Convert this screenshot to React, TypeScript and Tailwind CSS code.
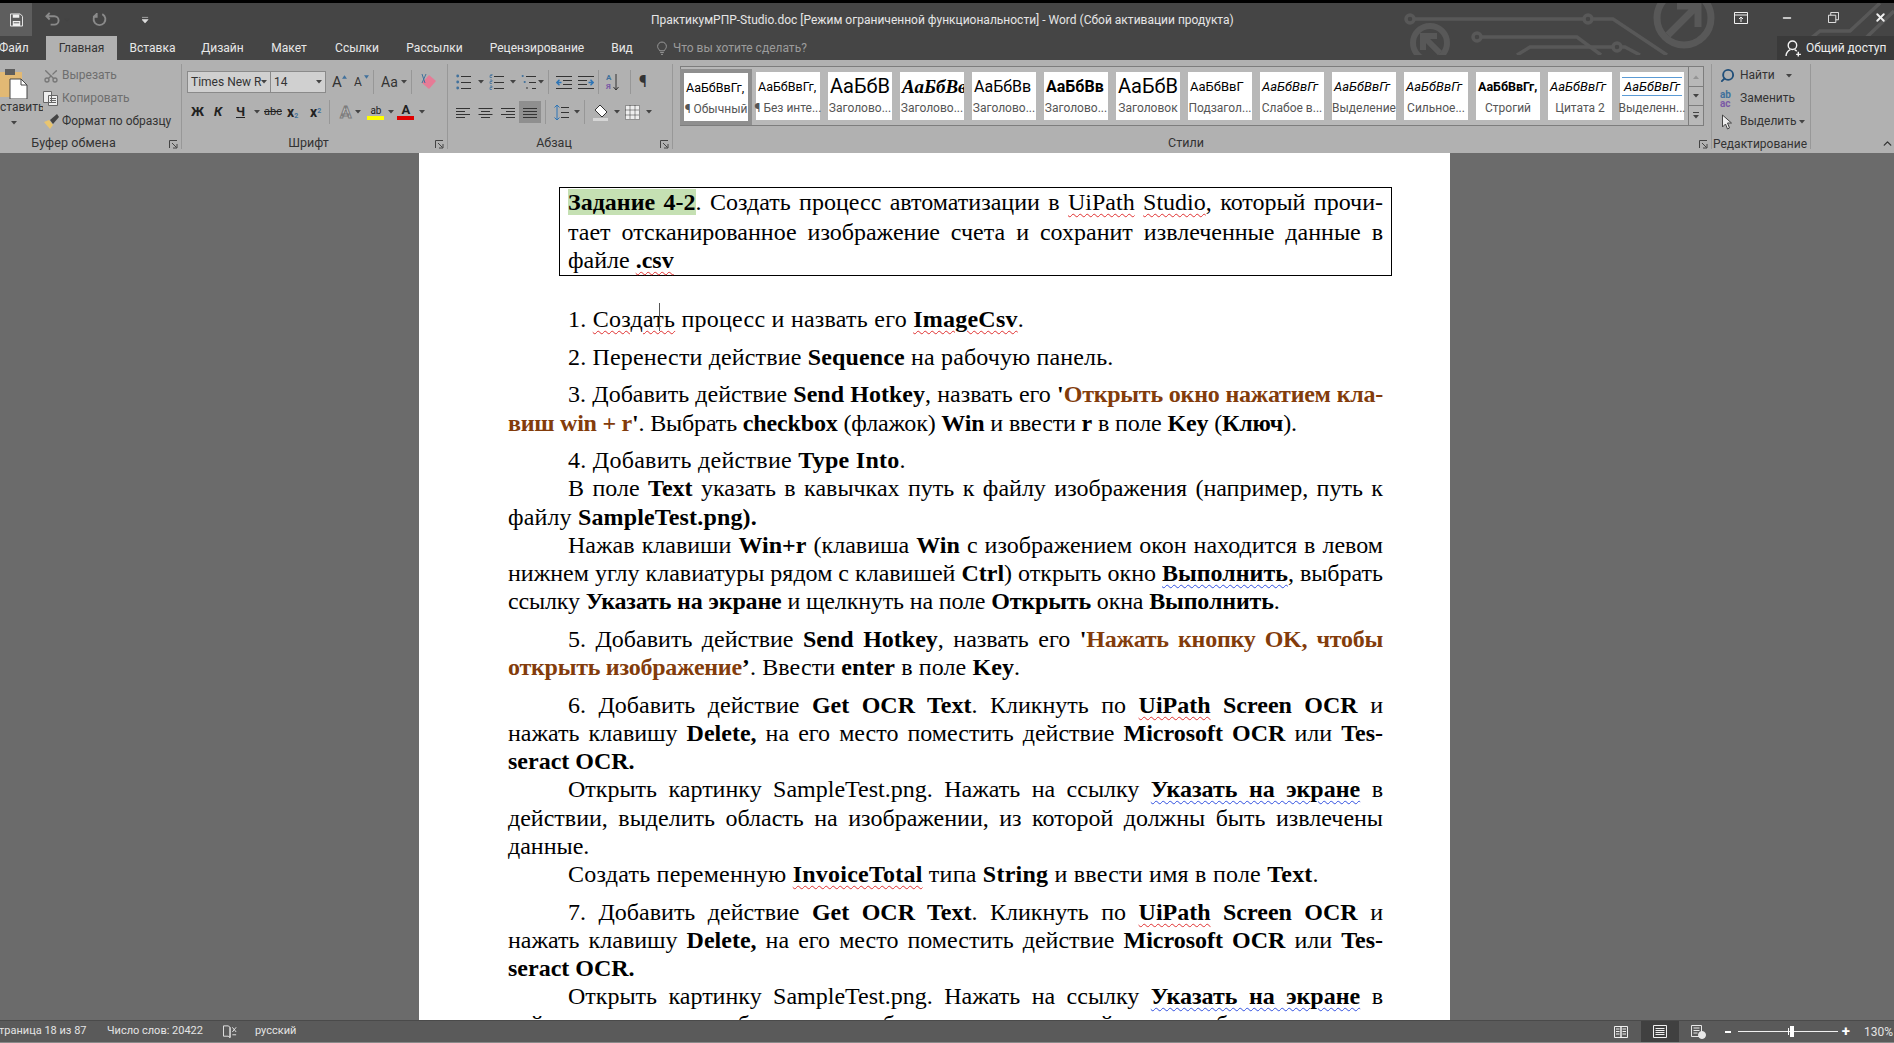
import type { ReactNode } from "react";
import { Minus, Scissors, Search, X, ChevronUp } from "lucide-react";

const STYLES = [
  { sample: "АаБбВвГг,", label: "¶ Обычный", cls: "text-[12.5px]", active: true },
  { sample: "АаБбВвГг,", label: "¶ Без инте...", cls: "text-[12.5px]" },
  { sample: "АаБбВ", label: "Заголово...", cls: "text-[20px]" },
  { sample: "АаБбВв", label: "Заголово...", cls: "text-[19px] italic font-bold font-['Liberation_Serif',serif]" },
  { sample: "АаБбВв", label: "Заголово...", cls: "text-[16px]" },
  { sample: "АаБбВв", label: "Заголово...", cls: "text-[16px] font-bold" },
  { sample: "АаБбВ", label: "Заголовок", cls: "text-[20px]" },
  { sample: "АаБбВвГ", label: "Подзагол...", cls: "text-[13px] text-[#444]" },
  { sample: "АаБбВвГг", label: "Слабое в...", cls: "text-[13px] italic text-[#555]" },
  { sample: "АаБбВвГг", label: "Выделение", cls: "text-[13px] italic" },
  { sample: "АаБбВвГг", label: "Сильное...", cls: "text-[13px] italic text-[#5b9bd5]" },
  { sample: "АаБбВвГг,", label: "Строгий", cls: "text-[12.5px] font-bold" },
  { sample: "АаБбВвГг", label: "Цитата 2", cls: "text-[13px] italic text-[#444]" },
  { sample: "АаБбВвГг", label: "Выделенн...", cls: "text-[13px] italic text-[#5b9bd5] border-y border-[#5b9bd5] px-[2px]" },
];

function Caret({ className = "" }: { className?: string }) {
  return (
    <svg viewBox="0 0 6 4" className={`h-[4px] w-[6px] shrink-0 ${className}`} aria-hidden>
      <path d="M0 0h6L3 3.5z" fill="#444" />
    </svg>
  );
}

function Launcher() {
  return (
    <svg viewBox="0 0 9 9" className="h-[9px] w-[9px]" aria-hidden>
      <path d="M.5 8V.5H8M3 3l4.5 4.5M4 8h4V4" fill="none" stroke="#444" />
    </svg>
  );
}

function VSep() {
  return <div className="mx-[4px] h-[24px] w-px shrink-0 bg-[#979797]" />;
}

/** Stack of text-style lines, used by lists and alignment buttons. */
function Lines({ align = "justify", w = 15 }: { align?: "left" | "center" | "right" | "justify"; w?: number }) {
  const rows = [2, 5, 8, 11];
  const len = (i: number) => (align === "justify" || i % 2 === 0 ? 14 : 9);
  return (
    <svg viewBox="0 0 15 13" width={w} height={13} aria-hidden>
      {rows.map((y, i) => {
        const l = len(i);
        const x = align === "center" ? (15 - l) / 2 : align === "right" ? 15 - l : 0;
        return <path key={y} d={`M${x} ${y + 0.5}h${l}`} stroke="#333" strokeWidth="1" />;
      })}
    </svg>
  );
}

function ListIcon({ kind }: { kind: "bullet" | "num" | "multi" }) {
  return (
    <svg viewBox="0 0 15 16" width={15} height={16} aria-hidden>
      {[2, 8, 14].map((y, i) => (
        <g key={y}>
          {kind === "bullet" && <circle cx="1.7" cy={y} r="1.4" fill="#41719c" />}
          {kind === "num" && <path d={`M1 ${y - 2}h2v1.5H1v2h2`} fill="none" stroke="#41719c" strokeWidth=".8" />}
          {kind === "multi" && i !== 2 && <circle cx={1.7 + i * 2} cy={y} r="1.1" fill="#41719c" />}
          {kind === "multi" && i === 2 && <circle cx="6" cy={y} r=".9" fill="#555" />}
          <path d={`M${kind === "multi" ? 5 + i * 3 : 5} ${y + 0.5}H15`} stroke="#333" />
        </g>
      ))}
    </svg>
  );
}

function IndentIcon({ flip }: { flip?: boolean }) {
  return (
    <svg viewBox="0 0 16 13" width={16} height={13} className={flip ? "-scale-x-100" : ""} aria-hidden>
      <path d="M0 .5h16M7 4.5h9M7 8.5h9M0 12.5h16" stroke="#333" />
      <path d="M5.5 6.5H1M3.5 3.7.8 6.5l2.7 2.8" fill="none" stroke="#2e75b6" strokeWidth="1.4" />
    </svg>
  );
}

function Group({
  width,
  label,
  launcher,
  labelCls = "pr-[12px] text-[12.5px]",
  children,
}: {
  width: string;
  label: string;
  launcher?: boolean;
  labelCls?: string;
  children: ReactNode;
}) {
  return (
    <div className={`flex h-full shrink-0 flex-col ${width}`}>
      <div className="min-h-0 flex-1">{children}</div>
      <div className={`relative flex h-[19px] items-center justify-center leading-none text-[#333] ${labelCls}`}>
        {label}
        {launcher && (
          <span className="absolute right-[3px] top-[6px]">
            <Launcher />
          </span>
        )}
      </div>
    </div>
  );
}

function RibbonSep() {
  return <div className="my-[4px] w-px shrink-0 bg-[#989898]" />;
}

function TitleBar() {
  return (
    <div className="relative flex h-[33px] items-center text-[#e4e4e4]">
      <svg className="absolute right-0 top-0 h-[52px] w-[514px]" viewBox="0 0 514 52" fill="none" stroke="#585858" strokeWidth="3.5" aria-hidden>
        <circle cx="30" cy="16" r="4" />
        <path d="M34 16h170M212 16h21l54 36" />
        <circle cx="208" cy="16" r="4" />
        <circle cx="304" cy="15" r="27" strokeWidth="7" />
        <path d="M288 32l29-29M297 3h21v21" strokeWidth="7" />
        <circle cx="50" cy="40" r="17" strokeWidth="6" />
        <path d="M60 50 43 33M43 47V33h14" strokeWidth="6" />
        <circle cx="97" cy="34" r="4" />
        <path d="M101 34h96l24 18" />
        <path d="M137 52l13-8h83M241 44h4l15 8" />
        <circle cx="237" cy="44" r="4" />
        <path d="M410 52l30-24h30l30-28M468 52l46-44" />
      </svg>
      <div className="relative flex h-full w-[32px] items-center justify-center bg-[#5e5e5e]">
        <svg viewBox="0 0 14 14" width={13} height={14} aria-hidden>
          <path d="M.5.5h10.5l2.5 2.5v10.5H.5z" fill="none" stroke="#f0f0f0" />
          <path d="M3 1v3.5h7V1zM3 8h8v5.5H3z" fill="#f0f0f0" />
          <path d="M4 10h6" stroke="#555" />
        </svg>
      </div>
      <svg viewBox="0 0 16 16" width={15} height={15} className="ml-[13px]" fill="none" stroke="#8a8a8a" strokeWidth="2" aria-hidden>
        <path d="M5 1 1.5 4.5 5 8M2 4.5h8a4.5 4.5 0 0 1 0 9H6" />
      </svg>
      <Caret className="ml-[4px] opacity-50" />
      <svg viewBox="0 0 16 16" width={15} height={15} className="ml-[22px]" fill="none" stroke="#8a8a8a" strokeWidth="2" aria-hidden>
        <path d="M5 2.2a6.3 6.3 0 1 0 6 0M5 1v4H1" />
      </svg>
      <svg viewBox="0 0 8 8" width={7} height={8} className="ml-[35px]" aria-hidden>
        <path d="M0 1h7M0 3.5h7L3.5 7.5z" fill="#ddd" stroke="#ddd" strokeWidth=".7" />
      </svg>
      <div className="absolute left-[651px] top-[10px] whitespace-nowrap text-[12px] leading-[14px] text-[#e6e6e6]">
        ПрактикумРПР-Studio.doc [Режим ограниченной функциональности] - Word (Сбой активации продукта)
      </div>
      <div className="absolute left-[1734px] top-[8px] flex items-center">
        <svg viewBox="0 0 14 12" width={14} height={12} fill="none" stroke="#f0f0f0" aria-hidden>
          <path d="M.5.5h13v11H.5zM.5 3h13M7 10V5M5 7l2-2 2 2" />
        </svg>
        <Minus size={12} strokeWidth={3} className="ml-[33px] text-[#f0f0f0]" />
        <svg viewBox="0 0 12 12" width={11} height={11} className="ml-[35px]" fill="none" stroke="#f0f0f0" aria-hidden>
          <path d="M.5 3.5h8v8h-8zM3 3.5v-3h8.5v8h-3" />
        </svg>
        <X size={13} strokeWidth={3.5} className="ml-[35px] text-[#f0f0f0]" />
      </div>
    </div>
  );
}

function Tabs() {
  const tabs = [
    ["Вставка", "w-[71px]"],
    ["Дизайн", "w-[69px]"],
    ["Макет", "w-[64px]"],
    ["Ссылки", "w-[72px]"],
    ["Рассылки", "w-[83px]"],
    ["Рецензирование", "w-[122px]"],
    ["Вид", "w-[48px]"],
  ];
  return (
    <div className="relative flex h-[24px] items-stretch text-[12px] text-[#e8e8e8]">
      <div className="flex w-[46px] items-center pb-[1px] -indent-[1px]">Файл</div>
      <div className="flex w-[71px] items-center justify-center bg-[#b1b1b1] text-[#333]">Главная</div>
      {tabs.map(([t, w]) => (
        <div key={t} className={`flex items-center justify-center ${w}`}>
          {t}
        </div>
      ))}
      <div className="ml-[11px] flex items-center gap-[6px] text-[#9c9c9c]">
        <svg viewBox="0 0 11 15" width={10} height={15} fill="none" stroke="#a0a0a0" aria-hidden>
          <path d="M3 10C2 8 .7 7.300.7 5.200a4.800 4.800 0 0 1 9.600 0C10.300 7.300 9 8 8 10zM3.500 12h4M4.500 14h2" />
        </svg>
        Что вы хотите сделать?
      </div>
      <div className="ml-auto flex w-[117px] items-center gap-[4px] bg-[#3a3a3a] pl-[8px] text-[12px] text-[#eee]">
        <svg viewBox="0 0 16 16" width={17} height={17} fill="none" stroke="#f4f4f4" strokeWidth="1.300" aria-hidden>
          <circle cx="7" cy="5" r="4" />
          <path d="M1 15c0-3 2-5 4-6M9 9c1 .4 1.500 1 2 1.500M12.500 11v4.500M10.500 13.500h4.500" />
        </svg>
        Общий доступ
      </div>
    </div>
  );
}

function Clipboard() {
  return (
    <Group width="w-[181px]" label="Буфер обмена" launcher labelCls="pr-[34px] text-[12.5px] tracking-[0.1px]">
      <div className="flex h-full">
        <div className="flex w-[43px] flex-col overflow-hidden">
          <svg viewBox="0 0 30 31" width={30} height={31} className="-ml-[2px] mt-[8px]" aria-hidden>
            <path d="M0 4h24v25H0z" fill="#e2b974" />
            <path d="M7 1h10v6H7z" fill="#5d5d5d" />
            <path d="M12 11h11l6 6v14H12z" fill="#fff" stroke="#444" />
            <path d="M23 11v6h6" fill="none" stroke="#444" />
          </svg>
          <div className="mt-[1px] whitespace-nowrap text-[12px] leading-[15px] text-[#333]">ставить</div>
          <Caret className="ml-[11px] mt-[6px]" />
        </div>
        <div className="flex flex-col pt-[4px] text-[12px] leading-[23px]">
          <div className="flex items-center gap-[3px] text-[#6e6e6e]">
            <Scissors size={16} className="-rotate-90 text-[#777]" />
            Вырезать
          </div>
          <div className="flex items-center gap-[4px] text-[#6e6e6e]">
            <svg viewBox="0 0 15 15" width={15} height={15} fill="#eee" stroke="#666" aria-hidden>
              <path d="M.5.5h8v11h-8zM5.500 4.500h9v10h-9z" />
              <path d="M7 7.500h6M7 9.500h6M7 11.500h6" />
            </svg>
            Копировать
          </div>
          <div className="flex items-center gap-[2px] text-[#333]">
            <svg viewBox="0 0 17 17" width={17} height={17} aria-hidden>
              <path d="M1 9l6 7 3-4-4-5z" fill="#e9c56f" />
              <path d="M7 7l7-6 2 3-6 7z" fill="#444" />
            </svg>
            Формат по образцу
          </div>
        </div>
      </div>
    </Group>
  );
}

function FontGroup() {
  return (
    <Group width="w-[265px]" label="Шрифт" launcher>
      <div className="pl-[5px] pt-[11px]">
        <div className="flex h-[22px] items-center text-[#333]">
          <div className="flex h-[22px] w-[84px] items-center justify-between border border-[#8a8a8a] bg-[#d0d0d0] px-[3px] text-[12px]">
            <span className="whitespace-nowrap">Times New R</span>
            <Caret />
          </div>
          <div className="-ml-px flex h-[22px] w-[56px] items-center justify-between border border-[#8a8a8a] bg-[#d0d0d0] px-[3px] text-[12px]">
            14
            <Caret />
          </div>
          <span className="ml-[6px] w-[14px] text-[15px] leading-none">A</span>
          <svg viewBox="0 0 6 4" width={5} height={4} className="-ml-[4px] -mt-[10px]" aria-hidden><path d="M0 4h6L3 0z" fill="#41719c" /></svg>
          <span className="ml-[7px] w-[10px] text-[12px] leading-none">A</span>
          <svg viewBox="0 0 6 4" width={5} height={4} className="-mt-[10px]" aria-hidden><path d="M0 0h6L3 4z" fill="#41719c" /></svg>
          <VSep />
          <span className="ml-[3px] text-[14px]">Aa</span>
          <Caret className="ml-[3px]" />
          <VSep />
          <svg viewBox="0 0 18 18" width={18} height={18} className="ml-[3px]" aria-hidden>
            <path d="M3 10l7-8 7 6-7 8z" fill="#e67b96" />
            <path d="M3 1l3 9M7 1 3 10" stroke="#41719c" fill="none" />
          </svg>
        </div>
        <div className="mt-[8px] flex h-[22px] items-center text-[#222]">
          <span className="ml-[4px] w-[22px] text-[13px] font-bold">Ж</span>
          <span className="ml-[1px] w-[22px] text-[13px] font-bold italic">К</span>
          <span className="w-[15px] text-[13px] font-bold underline">Ч</span>
          <Caret className="ml-[3px]" />
          <span className="ml-[4px] w-[23px] text-[11px] line-through">abc</span>
          <span className="w-[23px] text-[14px] font-bold">x<sub className="text-[7px] text-[#41719c]">2</sub></span>
          <span className="w-[15px] text-[14px] font-bold">x<sup className="text-[7px] text-[#41719c]">2</sup></span>
          <VSep />
          <span className="ml-[6px] text-[17px] font-bold leading-none text-[#c4c4c4] [-webkit-text-stroke:1px_#7c7c7c]">A</span>
          <Caret className="ml-[4px]" />
          <div className="ml-[6px] flex w-[17px] flex-col items-center leading-none">
            <span className="text-[10px] leading-[11px]">ab</span>
            <span className="h-[4px] w-[17px] bg-[#ffff00]" />
          </div>
          <Caret className="ml-[4px]" />
          <div className="ml-[3px] flex w-[17px] flex-col items-center leading-none">
            <span className="text-[13px] font-bold leading-[12px]">A</span>
            <span className="h-[4px] w-[17px] bg-[#e00000]" />
          </div>
          <Caret className="ml-[5px]" />
        </div>
      </div>
    </Group>
  );
}

function ParagraphGroup() {
  return (
    <Group width="w-[224px]" label="Абзац" launcher>
      <div className="pl-[8px] pt-[11px]">
        <div className="flex h-[22px] items-center">
          <ListIcon kind="bullet" />
          <Caret className="ml-[7px]" />
          <span className="ml-[5px]"><ListIcon kind="num" /></span>
          <Caret className="ml-[6px]" />
          <span className="ml-[5px]"><ListIcon kind="multi" /></span>
          <Caret className="ml-[2px]" />
          <VSep />
          <span className="ml-[3px]"><IndentIcon /></span>
          <span className="ml-[6px]"><IndentIcon flip /></span>
          <VSep />
          <div className="ml-[3px] flex h-[20px] w-[20px] items-center text-[8px] font-bold leading-[9px] text-[#41719c]">
            <span>
              А
              <br />
              <span className="text-[#7a5aa6]">Я</span>
            </span>
            <svg viewBox="0 0 6 17" width={6} height={17} className="ml-[2px]" fill="none" stroke="#333" aria-hidden>
              <path d="M3 0v16M.5 13 3 16l2.500-3" />
            </svg>
          </div>
          <VSep />
          <span className="ml-[4px] text-[16px] leading-none text-[#333]">¶</span>
        </div>
        <div className="mt-[8px] flex h-[22px] items-center">
          <Lines align="left" />
          <span className="ml-[7px]"><Lines align="center" /></span>
          <span className="ml-[7px]"><Lines align="right" /></span>
          <div className="ml-[4px] flex h-[22px] w-[22px] items-center justify-center bg-[#8f8f8f]">
            <Lines />
          </div>
          <VSep />
          <svg viewBox="0 0 15 17" width={15} height={17} className="ml-[4px]" fill="none" aria-hidden>
            <path d="M3 1v15M.5 3.500 3 1l2.500 2.500M.5 13.500 3 16l2.500-2.500" stroke="#2e75b6" />
            <path d="M7 3.500h8M7 8.500h8M7 13.500h8" stroke="#333" />
          </svg>
          <Caret className="ml-[5px]" />
          <VSep />
          <svg viewBox="0 0 16 18" width={16} height={18} className="ml-[4px]" aria-hidden>
            <path d="M7 2l7 7-5 5-7-7z" fill="#fff" stroke="#333" />
            <path d="M0 15h15v3H0z" fill="#d6d6d6" />
          </svg>
          <Caret className="ml-[5px]" />
          <svg viewBox="0 0 15 15" width={15} height={15} className="ml-[5px]" aria-hidden>
            <path d="M0 0h15v15H0z" fill="#eee" />
            <path d="M.5.5h14v14H.5zM5 .5v14M10 .5v14M.5 5h14M.5 10h14" stroke="#333" strokeDasharray="1 1" fill="none" />
          </svg>
          <Caret className="ml-[6px]" />
        </div>
      </div>
    </Group>
  );
}

function StylesGroup() {
  return (
    <Group width="w-[1038px]" label="Стили" launcher>
      <div className="pl-[7px] pt-[6px]">
        <div className="flex h-[60px] w-[1025px]">
          <div className="flex h-[60px] w-[1009px] gap-[8px] border border-[#7d7d7d] bg-[#b8b8b8] pl-[3px] pt-[5px]">
            {STYLES.map((s, i) => (
              <div
                key={i}
                className={`box-content flex h-[48px] w-[64px] shrink-0 flex-col items-center bg-white ${s.active ? "-mx-[4px] -mt-[3px] border-[4px] border-[#8f8f8f]" : ""}`}
              >
                <div className="flex h-[29px] w-full items-center justify-start overflow-hidden px-[2px]">
                  <span className={`whitespace-nowrap leading-[17px] text-black ${s.cls}`}>{s.sample}</span>
                </div>
                <div className="whitespace-nowrap text-[12px] leading-[15px] text-[#555]">{s.label}</div>
              </div>
            ))}
          </div>
          <div className="flex w-[15px] flex-col border border-l-0 border-[#7d7d7d] bg-[#b8b8b8]">
            <div className="flex h-[19px] items-center justify-center"><Caret className="rotate-180 opacity-30" /></div>
            <div className="flex h-[20px] items-center justify-center border-y border-[#7d7d7d]"><Caret /></div>
            <div className="flex flex-1 flex-col items-center justify-center gap-[2px]">
              <span className="h-px w-[6px] bg-[#444]" />
              <Caret />
            </div>
          </div>
        </div>
      </div>
    </Group>
  );
}

function EditGroup() {
  return (
    <Group width="w-[98px]" label="Редактирование" labelCls="pr-[2px] text-[12px]">
      <div className="flex flex-col pl-[8px] pt-[4px] text-[12px] leading-[23px] text-[#333]">
        <div className="flex items-center gap-[5px]">
          <Search size={15} strokeWidth={3} className="-scale-x-100 text-[#1f4e79]" />
          Найти
          <Caret className="ml-[6px]" />
        </div>
        <div className="flex items-center gap-[2px]">
          <span className="w-[18px] text-[10px] font-bold leading-[9px] text-[#41719c]">
            ab
            <br />
            <span className="text-[#7a5aa6]">ac</span>
          </span>
          Заменить
        </div>
        <div className="flex items-center gap-[5px]">
          <svg viewBox="0 0 12 16" width={15} height={16} aria-hidden>
            <path d="M1 1v12l3-3 2 5 2-1-2-5h4z" fill="#eee" stroke="#444" />
          </svg>
          Выделить
          <Caret className="-ml-[3px]" />
        </div>
      </div>
    </Group>
  );
}

function Ribbon() {
  return (
    <div className="relative flex h-[93px] bg-[#b1b1b1] text-[#333]">
      <Clipboard />
      <RibbonSep />
      <FontGroup />
      <RibbonSep />
      <ParagraphGroup />
      <RibbonSep />
      <StylesGroup />
      <RibbonSep />
      <EditGroup />
      <RibbonSep />
      <ChevronUp size={13} strokeWidth={2.500} className="absolute bottom-[3px] right-0 text-[#333]" />
    </div>
  );
}

function Line({ j, indent, t = "", children }: { j?: boolean; indent?: boolean; t?: string; children: ReactNode }) {
  return (
    <div className={`h-[28.2px] whitespace-nowrap ${indent ? "indent-[60px]" : ""} ${j ? "[text-align-last:justify]" : ""} ${t}`}>
      {children}
    </div>
  );
}

function B({ children }: { children: ReactNode }) {
  return <b className="font-bold">{children}</b>;
}
function Red({ children, bold }: { children: ReactNode; bold?: boolean }) {
  return (
    <span className={`underline decoration-[#e03030] decoration-wavy decoration-1 underline-offset-[3px] ${bold ? "font-bold" : ""}`}>
      {children}
    </span>
  );
}
function Blue({ children, bold }: { children: ReactNode; bold?: boolean }) {
  return (
    <span className={`underline decoration-[#3050e0] decoration-wavy decoration-1 underline-offset-[3px] ${bold ? "font-bold" : ""}`}>
      {children}
    </span>
  );
}
function Brown({ children }: { children: ReactNode }) {
  return <b className="font-bold tracking-[-0.25px] text-[#833c0b]">{children}</b>;
}

function Para({ children }: { children: ReactNode }) {
  return <div className="mb-[9.5px]">{children}</div>;
}

function Page() {
  return (
    <div className="ml-[419px] h-full w-[1031px] overflow-hidden bg-white pl-[89px] pr-[67px] pt-[34px] font-['Liberation_Serif',serif] text-[24px] leading-[28px] text-black">
      <div className="-mr-[9px] mb-[29px] ml-[51px] h-[89px] border border-black px-[8px]">
        <Line j>
          <b className="bg-[#c5e0b3] font-bold">Задание 4-2</b>. Создать процесс автоматизации в <Red>UiPath</Red> <Red>Studio</Red>, который прочи-
        </Line>
        <Line j t="pt-[2px]">тает отсканированное изображение счета и сохранит извлеченные данные в</Line>
        <Line t="pt-[2px]">
          файле <Red bold>.csv</Red>
        </Line>
      </div>
      <Para>
        <Line indent t="tracking-[0.24px]">
          1. <span className="relative"><Red>Создать</Red><span className="absolute left-[66px] top-[-3px] h-[28px] w-px bg-[#555]" /></span> процесс и назвать его <Red bold>ImageCsv</Red>.
        </Line>
      </Para>
      <Para>
        <Line indent t="tracking-[0.15px]">
          2. Перенести действие <B>Sequence</B> на рабочую панель.
        </Line>
      </Para>
      <Para>
        <Line indent j>
          3. Добавить действие <B>Send Hotkey</B>, назвать его <B>'</B><Brown>Открыть окно нажатием кла-</Brown>
        </Line>
        <Line t="tracking-[-0.15px]">
          <Brown>виш win + r</Brown><B>'</B>. Выбрать <B>checkbox</B> (флажок) <B>Win</B> и ввести <B>r</B> в поле <B>Key</B> (<B>Ключ</B>).
        </Line>
      </Para>
      <Para>
        <Line indent t="tracking-[0.27px]">
          4. Добавить действие <B>Type Into</B>.
        </Line>
        <Line indent j>
          В поле <B>Text</B> указать в кавычках путь к файлу изображения (например, путь к
        </Line>
        <Line t="tracking-[0.15px]">
          файлу <B>SampleTest.png).</B>
        </Line>
        <Line indent j>
          Нажав клавиши <B>Win+r</B> (клавиша <B>Win</B> с изображением окон находится в левом
        </Line>
        <Line j>
          нижнем углу клавиатуры рядом с клавишей <B>Ctrl</B>) открыть окно <Blue bold>Выполнить</Blue>, выбрать
        </Line>
        <Line t="tracking-[-0.15px]">
          ссылку <B>Указать на экране</B> и щелкнуть на поле <B>Открыть</B> окна <B>Выполнить</B>.
        </Line>
      </Para>
      <Para>
        <Line indent j>
          5. Добавить действие <B>Send Hotkey</B>, назвать его <B>'</B><Brown>Нажать кнопку OK, чтобы</Brown>
        </Line>
        <Line t="tracking-[0.1px]">
          <Brown>открыть изображение</Brown><B>’</B>. Ввести <B>enter</B> в поле <B>Key</B>.
        </Line>
      </Para>
      <Para>
        <Line indent j>
          6. Добавить действие <B>Get OCR Text</B>. Кликнуть по <Red bold>UiPath</Red> <B>Screen OCR</B> и
        </Line>
        <Line j>
          нажать клавишу <B>Delete,</B> на его место поместить действие <B>Microsoft OCR</B> или <B>Tes-</B>
        </Line>
        <Line>
          <B>seract OCR.</B>
        </Line>
        <Line indent j>
          Открыть картинку SampleTest.png. Нажать на ссылку <Blue bold>Указать на экране</Blue> в
        </Line>
        <Line j>действии, выделить область на изображении, из которой должны быть извлечены</Line>
        <Line>данные.</Line>
        <Line indent t="tracking-[0.23px]">
          Создать переменную <Red bold>InvoiceTotal</Red> типа <B>String</B> и ввести имя в поле <B>Text</B>.
        </Line>
      </Para>
      <Para>
        <Line indent j>
          7. Добавить действие <B>Get OCR Text</B>. Кликнуть по <Red bold>UiPath</Red> <B>Screen OCR</B> и
        </Line>
        <Line j>
          нажать клавишу <B>Delete,</B> на его место поместить действие <B>Microsoft OCR</B> или <B>Tes-</B>
        </Line>
        <Line>
          <B>seract OCR.</B>
        </Line>
        <Line indent j>
          Открыть картинку SampleTest.png. Нажать на ссылку <Blue bold>Указать на экране</Blue> в
        </Line>
        <Line j>действии, выделить область на изображении, из которой должны быть извлечены</Line>
      </Para>
    </div>
  );
}

function StatusBar() {
  return (
    <div className="flex h-[22px] shrink-0 items-center border-t border-[#4a4a4a] bg-[#5a5a5a] text-[11px] text-[#e4e4e4]">
      <div className="w-[107px] overflow-hidden whitespace-nowrap">
        <span className="-ml-[1px] block">траница 18 из 87</span>
      </div>
      <span className="whitespace-nowrap">Число слов: 20422</span>
      <svg viewBox="0 0 16 15" width={15} height={15} className="ml-[20px]" fill="none" stroke="#e8e8e8" aria-hidden>
        <path d="M.5 1.500h5l2 1.500v11l-2-1.500h-5zM7.500 3v11" />
        <path d="M10 3l4 5M14 3l-4 5M10 11h4" />
      </svg>
      <span className="ml-[17px]">русский</span>
      <div className="ml-auto flex h-full items-center">
        <svg viewBox="0 0 14 14" width={14} height={14} fill="none" stroke="#f0f0f0" aria-hidden>
          <path d="M.5 1.500h6.500v11H.5zM7 1.500h6.500v11H7zM2 4h3.500M2 6.500h3.500M2 9h3.500M8.500 4H12M8.500 6.500H12M8.500 9H12" />
        </svg>
        <div className="ml-[13px] flex h-full w-[38px] items-center justify-center bg-[#404040]">
          <svg viewBox="0 0 14 13" width={14} height={13} fill="none" stroke="#f0f0f0" aria-hidden>
            <path d="M.5.5h13v12H.5zM2.500 3.500h9M2.500 5.500h9M2.500 7.500h9M2.500 9.500h9" />
          </svg>
        </div>
        <svg viewBox="0 0 15 14" width={15} height={14} className="ml-[12px]" fill="none" stroke="#e8e8e8" aria-hidden>
          <path d="M.5.5h10v11H.5zM2.500 3h6M2.500 5.500h6M2.500 8h4" />
          <circle cx="11" cy="10" r="3.500" fill="#e8e8e8" />
        </svg>
        <span className="ml-[19px] h-[2px] w-[6px] bg-white" />
        <div className="relative ml-[7px] h-px w-[100px] bg-[#f0f0f0]">
          <span className="absolute left-[50px] top-[-3px] h-[7px] w-px bg-white" />
          <span className="absolute left-[52px] top-[-5px] h-[11px] w-[4px] bg-white" />
        </div>
        <span className="ml-[4px] text-[15px] font-bold leading-none text-white">+</span>
        <span className="ml-[14px] w-[30px] overflow-hidden whitespace-nowrap text-[12px]">130%</span>
      </div>
    </div>
  );
}

export default function App() {
  return (
    <div className="flex h-[1043px] w-[1894px] flex-col overflow-hidden bg-[#454545] font-['Roboto',sans-serif]">
      <div className="h-[3px] shrink-0 bg-black" />
      <TitleBar />
      <Tabs />
      <Ribbon />
      <div className="min-h-0 flex-1 bg-[#6b6b6b]">
        <Page />
      </div>
      <StatusBar />
      <div className="h-[1px] shrink-0 bg-[#8a8a8a]" />
    </div>
  );
}
